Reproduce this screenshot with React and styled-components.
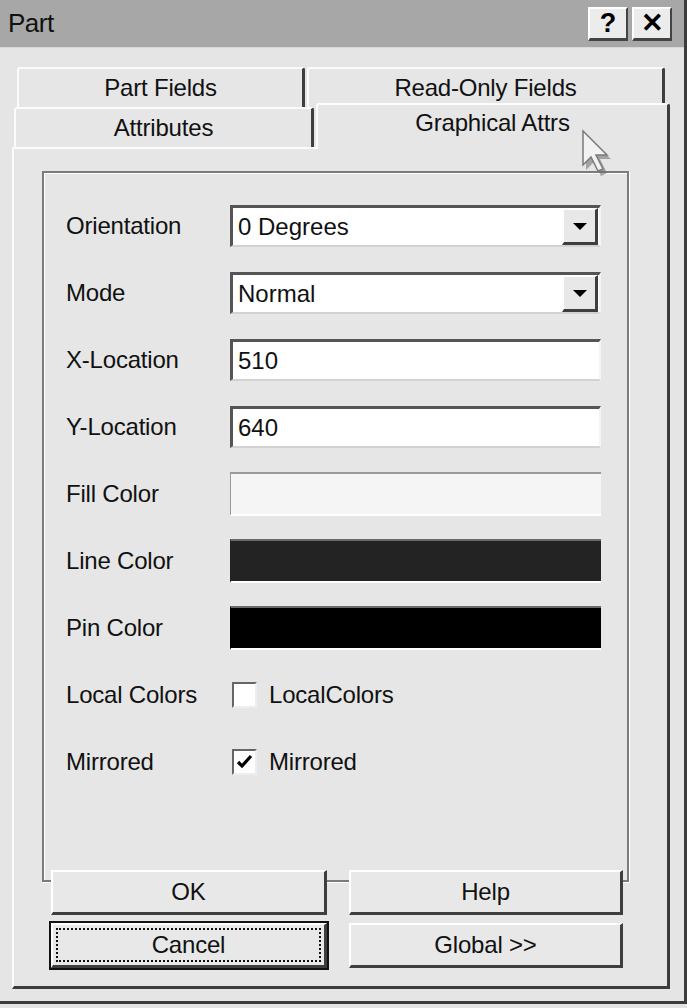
import React from "react";
import styled, { createGlobalStyle } from "styled-components";

const Global = createGlobalStyle`
  html, body {
    margin: 0;
    padding: 0;
    background: #e4e4e4;
  }
  body {
    font-family: "Liberation Sans", Arial, sans-serif;
    color: #111;
  }
`;

const Window = styled.div`
  position: relative;
  width: 687px;
  height: 1004px;
  box-sizing: border-box;
  background: #e5e5e5;
  border-right: 3px solid #3c3c3c;
  border-bottom: 3px solid #3c3c3c;
  display: flex;
  flex-direction: column;
  overflow: hidden;
`;

const TitleBar = styled.div`
  height: 48px;
  flex: 0 0 48px;
  background: #a7a7a7;
  display: flex;
  align-items: center;
  justify-content: space-between;
  padding: 0 12px 0 8px;
  border-bottom: 1px solid #d8d8d8;
  box-sizing: border-box;
`;

const Title = styled.span`
  font-size: 26px;
  color: #111;
  letter-spacing: -0.5px;
`;

const TitleButtons = styled.div`
  display: flex;
  gap: 4px;
`;

const TitleButton = styled.div`
  width: 40px;
  height: 34px;
  box-sizing: border-box;
  background: #ececec;
  border-top: 2px solid #fff;
  border-left: 2px solid #fff;
  border-right: 2px solid #444;
  border-bottom: 3px solid #444;
  display: flex;
  align-items: center;
  justify-content: center;
  font-size: 27px;
  font-weight: bold;
  color: #000;
`;

const Body = styled.div`
  flex: 1;
  padding: 19px 14px 12px 12px;
  display: flex;
  flex-direction: column;
`;

const TabRow = styled.div`
  display: grid;
  grid-template-columns: ${(p) => p.$cols};
  grid-template-rows: 40px;
  gap: ${(p) => p.$gap}px;
  padding-left: ${(p) => p.$indent}px;
  height: 40px;
  align-items: end;
`;

const Tab = styled.div`
  position: relative;
  z-index: ${(p) => (p.$active ? 2 : 1)};
  height: ${(p) => (p.$active ? 46 : 40)}px;
  margin-bottom: ${(p) => (p.$active ? -2 : 0)}px;
  padding-bottom: ${(p) => (p.$active ? 8 : 0)}px;
  box-sizing: border-box;
  background: #e6e6e6;
  border-top: 2px solid #fbfbfb;
  border-left: 2px solid #fbfbfb;
  border-right: 3px solid #3e3e3e;
  border-radius: 3px 3px 0 0;
  display: flex;
  align-items: center;
  justify-content: center;
  font-size: 24px;
  letter-spacing: -0.2px;
`;

const Panel = styled.div`
  flex: 1;
  background: #e6e6e6;
  border-top: 2px solid #fbfbfb;
  border-left: 2px solid #fbfbfb;
  border-right: 3px solid #3c3c3c;
  border-bottom: 3px solid #3c3c3c;
  box-sizing: border-box;
  padding: 22px 38px 17px 28px;
  display: flex;
  flex-direction: column;
`;

const GroupBox = styled.div`
  height: 711px;
  box-sizing: border-box;
  border: 2px solid #7c7c7c;
  box-shadow: inset 1px 1px 0 #fff, 1px 1px 0 #fff;
  padding: 32px 0 0 22px;
  display: grid;
  grid-template-columns: 164px 371px;
  grid-auto-rows: 42px;
  row-gap: 25px;
  align-items: center;
  align-content: start;
`;

const Label = styled.div`
  font-size: 24px;
  letter-spacing: -0.2px;
`;

const Field = styled.div`
  height: 42px;
  box-sizing: border-box;
  background: #fff;
  border-top: 3px solid #555;
  border-left: 3px solid #555;
  border-right: 2px solid #f4f4f4;
  border-bottom: 2px solid #d2d2d2;
  display: flex;
  align-items: center;
  padding-left: 5px;
  font-size: 24px;
  position: relative;
`;

const DropButton = styled.div`
  position: absolute;
  right: 1px;
  top: 0;
  bottom: 0;
  width: 36px;
  box-sizing: border-box;
  background: #e8e8e8;
  border-top: 2px solid #fff;
  border-left: 2px solid #fff;
  border-right: 3px solid #3e3e3e;
  border-bottom: 3px solid #3e3e3e;
  display: flex;
  align-items: center;
  justify-content: center;
`;

const Swatch = styled.div`
  height: 44px;
  box-sizing: border-box;
  background: ${(p) => p.$color};
  border-top: 2px solid ${(p) => (p.$light ? "#9a9a9a" : "#6a6a6a")};
  border-left: 1px solid ${(p) => (p.$light ? "#9a9a9a" : p.$color)};
  border-bottom: 2px solid #fff;
`;

const CheckRow = styled.label`
  display: flex;
  align-items: center;
  gap: 12px;
  font-size: 24px;
  letter-spacing: -0.2px;
  padding-left: 2px;
`;

const Box = styled.span`
  width: 25px;
  height: 26px;
  box-sizing: border-box;
  background: #fff;
  border-top: 2px solid #666;
  border-left: 2px solid #666;
  border-right: 2px solid #eee;
  border-bottom: 2px solid #eee;
  display: flex;
  align-items: center;
  justify-content: center;
`;

const ButtonGrid = styled.div`
  margin-top: -12px;
  margin-left: 9px;
  display: grid;
  grid-template-columns: 276px 274px;
  grid-auto-rows: 45px;
  column-gap: 22px;
  row-gap: 8px;
  position: relative;
  z-index: 1;
`;

const Button = styled.div`
  box-sizing: border-box;
  background: #e8e8e8;
  border-top: 2px solid #fff;
  border-left: 2px solid #fff;
  border-right: 3px solid #3e3e3e;
  border-bottom: 3px solid #3e3e3e;
  outline: ${(p) => (p.$default ? "2px solid #111" : "none")};
  display: flex;
  align-items: center;
  justify-content: center;
  font-size: 24px;
  letter-spacing: -0.2px;
  padding: 3px;
`;

const FocusRing = styled.span`
  flex: 1;
  align-self: stretch;
  border: 2px dotted #111;
  display: flex;
  align-items: center;
  justify-content: center;
`;

const Cursor = styled.svg`
  position: absolute;
  left: 580px;
  top: 128px;
  z-index: 5;
`;

const Arrow = () => (
  <svg width="16" height="9" viewBox="0 0 16 9">
    <path d="M1 1h14L8 8z" fill="#000" />
  </svg>
);

const Check = () => (
  <svg width="17" height="17" viewBox="0 0 17 17">
    <path d="M2 8l4 4 9-10" fill="none" stroke="#000" strokeWidth="3.2" />
  </svg>
);

const rows = [
  { label: "Orientation", kind: "select", value: "0 Degrees" },
  { label: "Mode", kind: "select", value: "Normal" },
  { label: "X-Location", kind: "text", value: "510" },
  { label: "Y-Location", kind: "text", value: "640" },
  { label: "Fill Color", kind: "swatch", color: "#f5f5f5", light: true },
  { label: "Line Color", kind: "swatch", color: "#232323" },
  { label: "Pin Color", kind: "swatch", color: "#000" },
  { label: "Local Colors", kind: "check", value: "LocalColors", checked: false },
  { label: "Mirrored", kind: "check", value: "Mirrored", checked: true },
];

function Control({ row }) {
  if (row.kind === "select")
    return (
      <Field>
        {row.value}
        <DropButton>
          <Arrow />
        </DropButton>
      </Field>
    );
  if (row.kind === "text") return <Field>{row.value}</Field>;
  if (row.kind === "swatch") return <Swatch $color={row.color} $light={row.light} />;
  return (
    <CheckRow>
      <Box>{row.checked && <Check />}</Box>
      {row.value}
    </CheckRow>
  );
}

export default function App() {
  return (
    <>
      <Global />
      <Window>
        <TitleBar>
          <Title>Part</Title>
          <TitleButtons>
            <TitleButton>?</TitleButton>
            <TitleButton>✕</TitleButton>
          </TitleButtons>
        </TitleBar>
        <Body>
          <TabRow $cols="288px 358px" $gap={2} $indent={5}>
            <Tab>Part Fields</Tab>
            <Tab>Read-Only Fields</Tab>
          </TabRow>
          <TabRow $cols="300px 354px" $gap={2} $indent={2}>
            <Tab>Attributes</Tab>
            <Tab $active>Graphical Attrs</Tab>
          </TabRow>
          <Panel>
            <GroupBox>
              {rows.map((r) => (
                <React.Fragment key={r.label}>
                  <Label>{r.label}</Label>
                  <Control row={r} />
                </React.Fragment>
              ))}
            </GroupBox>
            <ButtonGrid>
              <Button>OK</Button>
              <Button>Help</Button>
              <Button $default>
                <FocusRing>Cancel</FocusRing>
              </Button>
              <Button>Global &gt;&gt;</Button>
            </ButtonGrid>
          </Panel>
        </Body>
        <Cursor width="34" height="52" viewBox="0 0 34 52">
          <path d="M6 8 L6 42 L14 34 L21 48 L27 45 L20 31 L31 31 Z" fill="#6a6a6a" opacity="0.55" />
          <path d="M3 3 L3 37 L11 29 L18 43 L23 41 L16 27 L27 27 Z" fill="#f2f2f2" stroke="#7a7a7a" strokeWidth="1.5" />
        </Cursor>
      </Window>
    </>
  );
}
